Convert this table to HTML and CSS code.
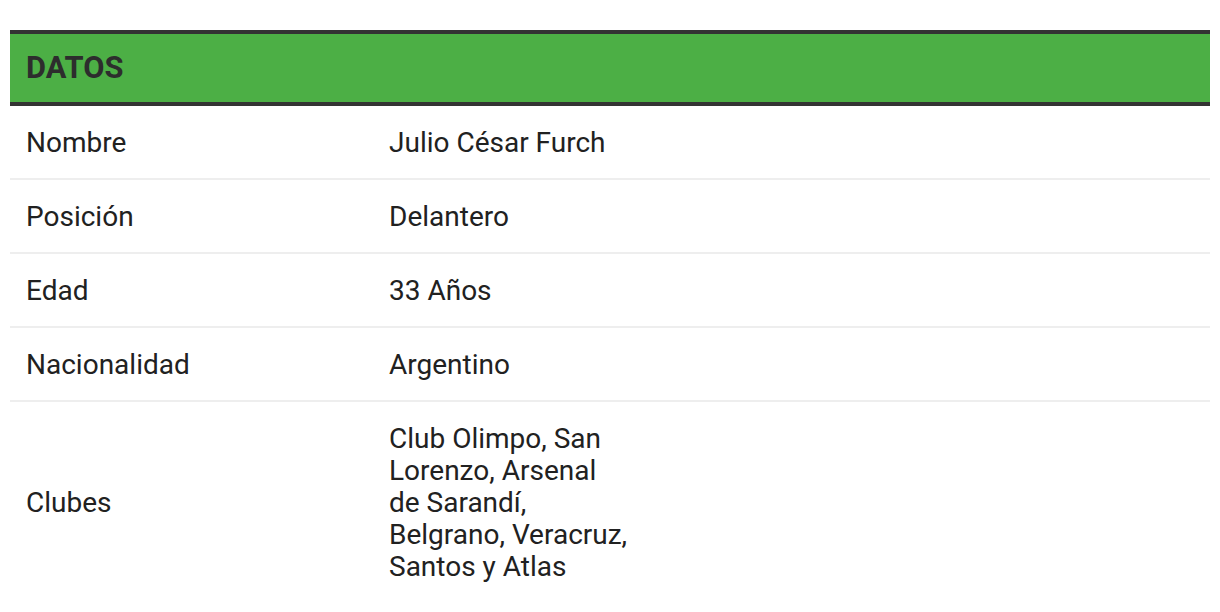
FILE: index.html
```html
<!DOCTYPE html>
<html lang="es">
<head>
<meta charset="utf-8">
<link rel="stylesheet" href="styles.css">
</head>
<body>
<div class="page">
  <table class="datos">
    <thead>
      <tr><th colspan="2">DATOS</th></tr>
    </thead>
    <tbody>
      <tr><td class="k">Nombre</td><td class="v">Julio César Furch</td></tr>
      <tr><td class="k">Posición</td><td class="v">Delantero</td></tr>
      <tr><td class="k">Edad</td><td class="v">33 Años</td></tr>
      <tr><td class="k">Nacionalidad</td><td class="v">Argentino</td></tr>
      <tr><td class="k">Clubes</td><td class="v"><div class="wrap">Club Olimpo, San Lorenzo, Arsenal de Sarandí, Belgrano, Veracruz, Santos y Atlas</div></td></tr>
    </tbody>
  </table>
</div>
</body>
</html>
```
FILE: styles.css
```css
html, body { margin: 0; padding: 0; background: #fff; }
.page { padding: 30px 10px 0 10px; }
.datos {
  width: 1200px;
  border-collapse: collapse;
  font-family: Roboto, "Liberation Sans", sans-serif;
  color: #212121;
}
.datos th {
  background: #4caf45;
  border-top: 4px solid #333;
  border-bottom: 4px solid #333;
  padding: 0 16px;
  height: 68px;
  line-height: 32px;
  text-align: left;
  font-size: 30.8px;
  font-weight: 700;
  color: #2d2d2d;
}
.datos td {
  font-size: 28px;
  line-height: 32px;
  padding: 21px 16px 19px;
  border-bottom: 2px solid #eee;
  vertical-align: middle;
}
.datos tr:last-child td { border-bottom: none; }
.datos td.k { width: 331px; }
.wrap { width: 241px; }
```
